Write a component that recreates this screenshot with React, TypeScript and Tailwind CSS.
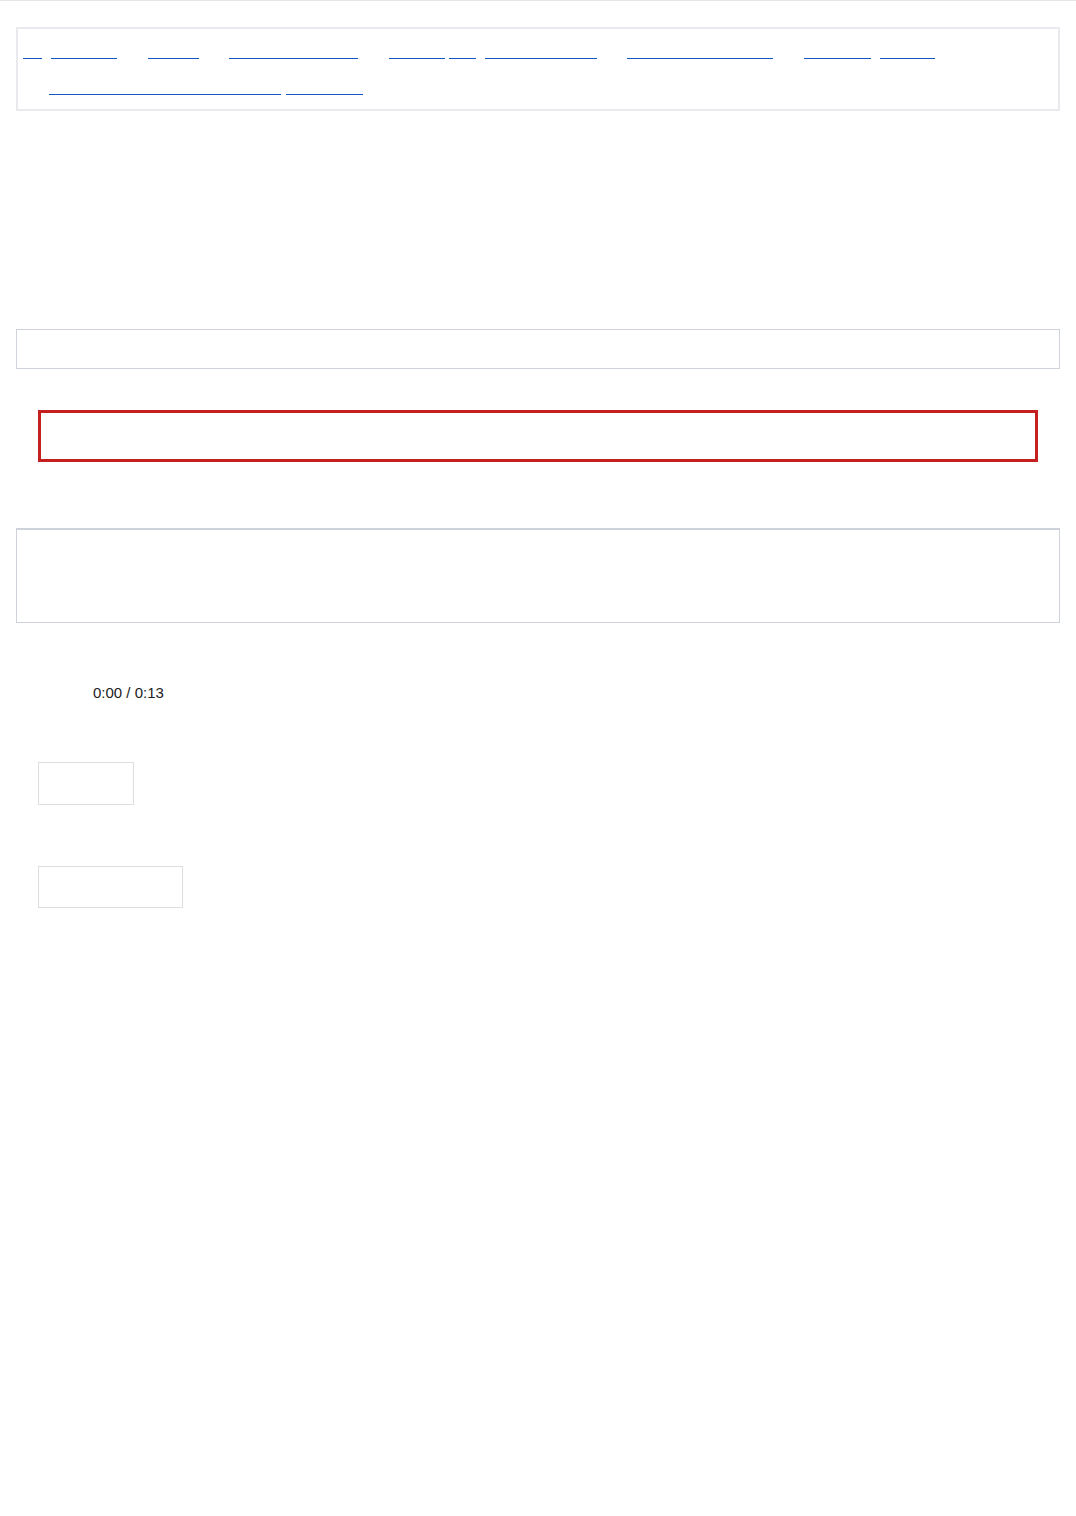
const row1 = [
  { w: "w-[19px]", ml: "ml-[5px]" },
  { w: "w-[66px]", ml: "ml-[9px]" },
  { w: "w-[51px]", ml: "ml-[31px]" },
  { w: "w-[129px]", ml: "ml-[30px]" },
  { w: "w-[56px]", ml: "ml-[31px]" },
  { w: "w-[27px]", ml: "ml-[4px]" },
  { w: "w-[112px]", ml: "ml-[9px]" },
  { w: "w-[146px]", ml: "ml-[30px]" },
  { w: "w-[67px]", ml: "ml-[31px]" },
  { w: "w-[55px]", ml: "ml-[9px]" },
];

const row2 = [
  { w: "w-[232px]", ml: "ml-[31px]" },
  { w: "w-[77px]", ml: "ml-[5px]" },
];

const App = () => {
  return (
    <div className="min-h-[1516px] bg-white font-['Liberation_Sans',Arial,sans-serif] text-[#222]">
      <div className="border-t border-[#e5e5e5] px-4">
        {/* Link box */}
        <nav className="mt-[26px] flex flex-col border-2 border-[#e8eaed] pt-[29px] pb-[14px]">
          <div className="flex">
            {row1.map((l, i) => (
              <a key={i} href="#" className={`block border-b border-[#1257c4] ${l.w} ${l.ml}`} />
            ))}
          </div>
          <div className="mt-[35px] flex">
            {row2.map((l, i) => (
              <a key={i} href="#" className={`block border-b border-[#1257c4] ${l.w} ${l.ml}`} />
            ))}
          </div>
        </nav>

        {/* Empty panel */}
        <div className="mt-[218px] h-[40px] border border-[#cfd3dc]" />

        {/* Alert box */}
        <div className="mx-[22px] mt-[41px] h-[52px] border-[3px] border-[#c52020]" />

        {/* Player panel */}
        <div className="mt-[66px] h-[95px] border border-t-2 border-[#cdd2db]" />

        <p className="mt-[61px] ml-[77px] text-[15px] leading-[18px]">0:00 / 0:13</p>

        {/* Inputs */}
        <div className="ml-[22px] mt-[60px] h-[43px] w-[96px] border border-[#dedede]" />
        <div className="ml-[22px] mt-[61px] h-[42px] w-[145px] border border-[#dedede]" />
      </div>
    </div>
  );
};

export default App;
